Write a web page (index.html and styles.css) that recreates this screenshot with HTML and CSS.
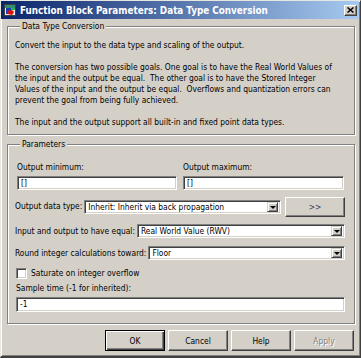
FILE: index.html
```html
<!DOCTYPE html>
<html lang="en">
<head>
    <meta charset="UTF-8">
    <title>Function Block Parameters: Data Type Conversion</title>
    <link rel="stylesheet" href="styles.css">
</head>
<body>
    <div class="window">
        <div class="titlebar">
            <svg class="app-icon" width="12" height="12" viewBox="0 0 12 12">
                <rect x="0.5" y="0.5" width="11" height="11" fill="#e8e8e8" stroke="#404040"/>
                <rect x="1" y="1" width="10" height="3" fill="#2f8f6f"/>
                <rect x="2" y="4" width="5" height="6" fill="#1c3fb0"/>
                <path d="M3 7 L8 6 L10 8 L8 11 L4 10 Z" fill="#e01010"/>
                <rect x="7" y="4" width="4" height="2" fill="#30b050"/>
            </svg>
            <span class="title">Function Block Parameters: Data Type Conversion</span>
            <span class="close-btn">
                <svg width="7" height="6" viewBox="0 0 7 6">
                    <path d="M0.5 0.5 L6.5 5.5 M6.5 0.5 L0.5 5.5" stroke="#000" stroke-width="1.5"/>
                </svg>
            </span>
        </div>

        <div class="content">
            <fieldset class="group desc">
                <legend>Data Type Conversion</legend>
                <p>Convert the input to the data type and scaling of the output.</p>
                <p>The conversion has two possible goals. One goal is to have the Real World Values of<br>
                the input and the output be equal.&nbsp; The other goal is to have the Stored Integer<br>
                Values of the input and the output be equal.&nbsp; Overflows and quantization errors can<br>
                prevent the goal from being fully achieved.</p>
                <p>The input and the output support all built-in and fixed point data types.</p>
            </fieldset>

            <fieldset class="group params">
                <legend>Parameters</legend>
                <div class="minmax">
                    <div class="field">
                        <label>Output minimum:</label>
                        <div class="edit">[]</div>
                    </div>
                    <div class="field">
                        <label>Output maximum:</label>
                        <div class="edit">[]</div>
                    </div>
                </div>

                <div class="row type-row">
                    <label>Output data type:</label>
                    <div class="combo">
                        <span class="combo-text">Inherit: Inherit via back propagation</span>
                        <span class="combo-arrow"></span>
                    </div>
                    <button class="btn show-btn">&gt;&gt;</button>
                </div>

                <div class="row">
                    <label>Input and output to have equal:</label>
                    <div class="combo">
                        <span class="combo-text">Real World Value (RWV)</span>
                        <span class="combo-arrow"></span>
                    </div>
                </div>

                <div class="row">
                    <label>Round integer calculations toward:</label>
                    <div class="combo">
                        <span class="combo-text">Floor</span>
                        <span class="combo-arrow"></span>
                    </div>
                </div>

                <div class="check-row">
                    <span class="checkbox"></span>
                    <label>Saturate on integer overflow</label>
                </div>

                <label class="sample-label">Sample time (-1 for inherited):</label>
                <div class="edit wide">-1</div>
            </fieldset>

            <div class="buttons">
                <button class="btn default">OK</button>
                <button class="btn">Cancel</button>
                <button class="btn">Help</button>
                <button class="btn disabled">Apply</button>
            </div>
        </div>
    </div>
</body>
</html>
```

FILE: styles.css
```css
body {
    margin: 0;
    padding: 0;
    background-color: #d4d0c8;
    font-family: "DejaVu Sans Condensed", "DejaVu Sans", sans-serif;
    font-stretch: condensed;
    font-size: 8.4px;
    color: #000;
}

.window {
    width: 361px;
    height: 358px;
    box-sizing: border-box;
    border-left: 1px solid #e8e6e0;
    border-top: 1px solid #e8e6e0;
    border-right: 1px solid #404040;
    border-bottom: 2px solid #404040;
    box-shadow: inset 1px 1px #fff, inset -1px -1px #808080;
    overflow: hidden;
}

.titlebar {
    height: 18px;
    margin: 0 1px 0 0;
    background: linear-gradient(to right, #0a246a, #a6caf0);
    display: flex;
    align-items: center;
    padding-left: 3px;
}

.app-icon {
    flex: none;
}

.title {
    color: #fff;
    font-weight: bold;
    font-size: 9.8px;
    margin-left: 4px;
    flex: 1;
    white-space: nowrap;
}

.close-btn {
    width: 13px;
    height: 11px;
    box-sizing: border-box;
    margin-right: 2px;
    background-color: #d4d0c8;
    border: 1px solid;
    border-color: #fff #404040 #404040 #fff;
    box-shadow: inset -1px -1px #808080;
    display: flex;
    align-items: center;
    justify-content: center;
}

.close-btn svg {
    display: block;
}

.content {
    padding: 2px 5px 0 6px;
}

.group {
    margin: 0;
    padding: 0 9px 0 8px;
    border: 1px solid #808080;
    box-shadow: inset 1px 1px #fff, 1px 1px #fff;
    min-width: 0;
}

.group legend {
    padding: 0 2px;
    margin-left: 4px;
    line-height: 11px;
    background-color: #d4d0c8;
}

.desc {
    padding-top: 8px;
    padding-bottom: 6px;
}

.desc p {
    margin: 0 0 11px 0;
    line-height: 11px;
    white-space: nowrap;
    margin-left: -1px;
}

.desc p:last-child {
    margin-bottom: 0;
}

.params {
    margin-top: 4px;
    padding-top: 12px;
    padding-bottom: 11px;
}

label {
    line-height: 11px;
    white-space: nowrap;
}

.minmax {
    display: grid;
    grid-template-columns: 160px 161px;
    gap: 6px;
    margin-left: 1px;
}

.field {
    display: flex;
    flex-direction: column;
    gap: 3px;
}

.edit {
    height: 14px;
    box-sizing: border-box;
    background-color: #fff;
    border: 1px solid;
    border-color: #808080 #fff #fff #808080;
    box-shadow: inset 1px 1px #404040, inset -1px -1px #d4d0c8;
    padding: 0 3px;
    line-height: 12px;
}

.edit.wide {
    height: 15px;
    margin-top: 3px;
    line-height: 13px;
}

.row {
    display: flex;
    align-items: center;
    gap: 2px;
    margin-top: 8px;
    height: 14px;
}

.type-row {
    height: 19px;
    margin-top: 7px;
}

.row label {
    margin-left: -1px;
}

.combo {
    flex: 1;
    height: 14px;
    box-sizing: border-box;
    background-color: #fff;
    border: 1px solid;
    border-color: #808080 #fff #fff #808080;
    box-shadow: inset 1px 1px #404040, inset -1px -1px #d4d0c8;
    display: flex;
    align-items: center;
    padding: 2px 2px 2px 3px;
}

.combo-text {
    flex: 1;
    white-space: nowrap;
    overflow: hidden;
}

.combo-arrow {
    width: 11px;
    height: 10px;
    box-sizing: border-box;
    background-color: #d4d0c8;
    border: 1px solid;
    border-color: #d4d0c8 #404040 #404040 #d4d0c8;
    box-shadow: inset 1px 1px #fff, inset -1px -1px #808080;
    position: relative;
}

.combo-arrow::after {
    content: "";
    position: absolute;
    left: 2px;
    top: 3px;
    border-left: 3px solid transparent;
    border-right: 3px solid transparent;
    border-top: 3px solid #000;
}

.btn {
    font-family: inherit;
    font-stretch: condensed;
    font-size: 8.4px;
    color: #000;
    background-color: #d4d0c8;
    border: 1px solid;
    border-color: #fff #404040 #404040 #fff;
    box-shadow: inset -1px -1px #808080;
    padding: 0;
    height: 20px;
}

.show-btn {
    width: 60px;
    margin-left: 2px;
    color: #3a3a5a;
}

.check-row {
    display: flex;
    align-items: center;
    gap: 4px;
    margin-top: 8px;
}

.checkbox {
    width: 11px;
    height: 11px;
    box-sizing: border-box;
    background-color: #fff;
    border: 1px solid;
    border-color: #808080 #fff #fff #808080;
    box-shadow: inset 1px 1px #404040, inset -1px -1px #d4d0c8;
}

.sample-label {
    display: block;
    margin-top: 4px;
}

.buttons {
    display: flex;
    justify-content: flex-end;
    gap: 3px;
    margin-top: 6px;
    padding-right: 1px;
}

.buttons .btn {
    width: 60px;
    height: 21px;
}

.btn.default {
    border-color: #000;
    box-shadow: inset 1px 1px #fff, inset -1px -1px #404040, inset -2px -2px #808080;
}

.btn.disabled {
    color: #808080;
    text-shadow: 1px 1px #fff;
}
```
